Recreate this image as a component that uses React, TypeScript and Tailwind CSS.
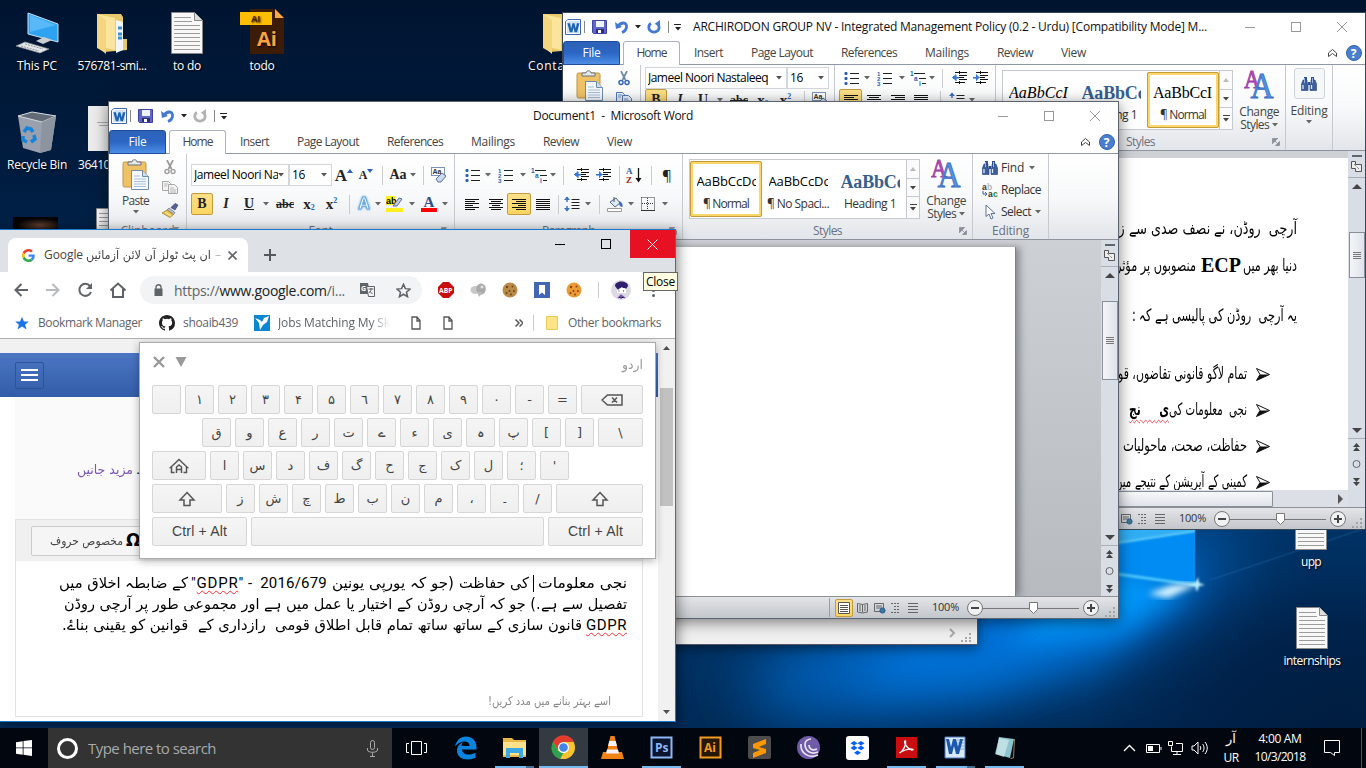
import React, { useLayoutEffect, useRef } from 'react';

const UI = "font-['Open_Sans','Noto_Sans',sans-serif]";
const UR = "font-['DejaVu_Sans',sans-serif]";

/* One line of text spaced or scaled to fill the width of its box. */
function Fit({ c, children, rtl = false }: { c: string; children: React.ReactNode; rtl?: boolean }) {
  const box = useRef<HTMLSpanElement>(null);
  const inner = useRef<HTMLSpanElement>(null);
  useLayoutEffect(() => {
    const b = box.current!;
    const i = inner.current!;
    i.style.letterSpacing = '';
    i.style.transform = '';
    const w = i.getBoundingClientRect().width;
    const target = b.clientWidth;
    if (rtl) i.style.transform = `scaleX(${target / w})`;
    else i.style.letterSpacing = `${(target - w) / Math.max(1, (i.textContent || '').length)}px`;
  });
  return (
    <span ref={box} className={`block shrink-0 whitespace-nowrap ${c}`}>
      <span ref={inner} dir={rtl ? 'rtl' : 'ltr'} lang={rtl ? 'ur' : 'en'} className="inline-block origin-left whitespace-pre">{children}</span>
    </span>
  );
}

function Cell({ w, children, c = '' }: { w: string; children?: React.ReactNode; c?: string }) {
  return <div className={`flex h-[22px] shrink-0 items-center justify-center ${w} ${c}`}>{children}</div>;
}
const Caret = ({ f = '#666' }: { f?: string }) => (
  <svg width="6" height="4" viewBox="0 0 6 4" className="shrink-0"><path d="M0 0h6L3 3.6z" fill={f} /></svg>
);
const Sep = () => <div className="h-[19px] w-px bg-[#c9ccd1]" />;
const ACTIVE = 'rounded-[2px] border border-[#c29b3e] bg-linear-to-b from-[#fbe08a] to-[#fdd55f]';

/* ---------- ribbon glyphs ---------- */
function WordLogo({ s = 16 }: { s?: number }) {
  return (
    <svg width={s} height={s} viewBox="0 0 17 17">
      <path d="M3 .5h13.500v16H.5V3z" fill="#fff" stroke="#2a5ca8" />
      <path d="M2 4l2-2h11v13H2z" fill="#cfe3f8" />
      <path d="M2.500 4.500h2.800l1.200 5.500L8 4.500h2l1.400 5.500 1.200-5.500h2.800l-2.700 9.500h-2.500L9 9l-1.200 5H5.200z" fill="#1e62b4" />
    </svg>
  );
}
const Save = () => (
  <svg width="15" height="14" viewBox="0 0 15 14">
    <path d="M.5.5h14v13h-13l-1-1z" fill="#5f66cc" stroke="#3f44a0" />
    <path d="M4 1h8v6H4z" fill="#eef2fc" /><path d="M4 9h8v4H4z" fill="#2d2f70" /><path d="M6 10h3v3H6z" fill="#fff" />
  </svg>
);
const Undo = () => (
  <svg width="14" height="14" viewBox="0 0 14 14">
    <path d="M3 6.500C6 1.500 12 2 11.500 7c-.2 2.500-2 4.500-4.500 5.500" fill="none" stroke="#4379d0" strokeWidth="2.800" />
    <path d="M0 2l1 7 6-2z" fill="#4379d0" />
  </svg>
);
const Redo = ({ f }: { f: string }) => (
  <svg width="14" height="14" viewBox="0 0 14 14">
    <path d="M4 3.500C1 5 1 10 4.500 11.500s8-.5 7.500-4.500c0-1.500-.8-2.800-2-3.500" fill="none" stroke={f} strokeWidth="2.800" />
    <path d="M13 0v6L7.500 4z" fill={f} />
  </svg>
);
const Clipboard = () => (
  <svg width="27" height="31" viewBox="0 0 27 31">
    <rect x="1" y="3" width="23" height="25" rx="1.500" fill="#efc265" stroke="#c1934a" />
    <path d="M6 6V3h4c0-3 5-3 5 0h4v3z" fill="#e6e9ed" stroke="#6c7076" />
    <path d="M9.500 11.500h11l6 6v13h-17z" fill="#f5f9fd" stroke="#6e8cab" />
    <path d="M20.500 11.500v6h6" fill="#cfdeed" stroke="#6e8cab" />
    <path d="M12 17h6M12 20h12M12 22.500h12M12 25h12M12 27.500h12" stroke="#a8c0d8" />
  </svg>
);
const Scissors = ({ f, g }: { f: string; g: string }) => (
  <svg width="12" height="15" viewBox="0 0 12 15" fill="none">
    <path d="M3 0l4.500 9M9 0L4.500 9" stroke={f} strokeWidth="1.700" />
    <circle cx="3" cy="11.500" r="2" stroke={g} strokeWidth="1.500" /><circle cx="9" cy="11.500" r="2" stroke={g} strokeWidth="1.500" />
  </svg>
);
const Copy = ({ f, g }: { f: string; g: string }) => (
  <svg width="16" height="13" viewBox="0 0 16 13">
    <path d="M.5.5h6l2 2v7h-8z" fill={g} stroke={f} /><path d="M6.500 3.500h6l3 3v6h-9z" fill={g} stroke={f} />
    <path d="M2 3h4M2 5h3M8 7h4M8 9h6M8 11h6" stroke={f} strokeWidth=".8" />
  </svg>
);
const Brush = () => (
  <svg width="17" height="15" viewBox="0 0 17 15">
    <path d="M9 4.500l4-4 3 1.500-3 5z" fill="#56629b" stroke="#384278" strokeWidth=".7" />
    <path d="M7 5l6 4.500-1.500 2L5 7z" fill="#b4bbca" stroke="#5d6474" strokeWidth=".6" />
    <path d="M5 7l6.500 4.500L8 14.500 0 10z" fill="#e6c456" stroke="#96782a" strokeWidth=".7" />
    <path d="M3 9l6 4" stroke="#fff2b0" />
  </svg>
);
function Align({ k }: { k: 'l' | 'c' | 'r' | 'j' }) {
  return (
    <svg width="14" height="11" viewBox="0 0 14 11" shapeRendering="crispEdges">
      {[14, 10, 14, 8, 14, 10].map((w, i) => {
        const ww = k === 'j' ? 14 : w;
        const x = k === 'r' ? 14 - ww : k === 'c' ? (14 - ww) / 2 : 0;
        return <rect key={i} x={x} y={i * 2} width={ww} height="1" fill="#111" />;
      })}
    </svg>
  );
}
function List({ k }: { k: 'b' | 'n' | 'm' }) {
  return (
    <svg width="16" height="15" viewBox="0 0 16 15">
      {k === 'b' && [2, 7, 12].map((y) => <rect key={y} x=".5" y={y - 1} width="3" height="3" rx="1" fill="#2b5fb0" />)}
      {k === 'n' && ['1', '2', '3'].map((t, i) => <text key={t} x="0" y={4.500 + i * 5} fontSize="6" fontWeight="700" fontFamily="Liberation Sans" fill="#2b5fb0">{t}</text>)}
      {k !== 'm' && <path d="M6 2.500h9M6 7.500h9M6 12.500h9" stroke="#222" />}
      {k === 'm' && (
        <g fontSize="6.500" fontWeight="700" fontFamily="Liberation Sans" fill="#2b5fb0">
          <text x="0" y="5">1</text><text x="4" y="10">a</text><text x="9" y="15">i</text>
          <path d="M4 2.500h11M9 7.500h7M12 12.500h4" stroke="#222" />
        </g>
      )}
    </svg>
  );
}
const Indent = ({ inn }: { inn: boolean }) => (
  <svg width="17" height="14" viewBox="0 0 17 14" shapeRendering="crispEdges">
    <path d="M4 1.500h12M8 4.500h8M8 6.500h5M8 8.500h8M4 11.500h10" stroke="#111" />
    <path d={inn ? 'M1 6h3V3.500l3.500 3L4 9.500V7H1z' : 'M8 6H5V3.500L1 6.500l4 3V7h3z'} fill="#3b7ad0" stroke="#3b7ad0" strokeWidth=".6" />
    <path d="M8.500 0v14" stroke="#111" strokeDasharray="1 1" />
  </svg>
);
const Spacing = () => (
  <svg width="16" height="16" viewBox="0 0 16 16">
    <path d="M3 1v5M3 10v5" stroke="#3b73c4" strokeWidth="1.500" />
    <path d="M0 4l3-3.600L6 4zM0 12l3 3.600L6 12z" fill="#3b73c4" /><path d="M7.500 3.500h8M7.500 6.500h8M7.500 9.500h8M7.500 12.500h8" stroke="#222" />
  </svg>
);
const Bucket = () => (
  <svg width="17" height="16" viewBox="0 0 17 16">
    <path d="M3 6l6-4 4 5-5 4z" fill="#dfe9f5" stroke="#4d6b93" /><path d="M7 1v5" stroke="#555" />
    <path d="M12 5c3 1 4 3 3.500 6-2 0-3-1-3.500-3z" fill="#3f6fb5" /><path d="M.5 12.500h14v3H.5z" fill="#fff" stroke="#999" />
  </svg>
);
const Borders = () => (
  <svg width="14" height="14" viewBox="0 0 14 14" fill="none" stroke="#333">
    <path d="M.5.500h13v13M.5.500v13M6.500 1v12M1 6.500h12" strokeDasharray="1 1" /><path d="M0 13.500h14" />
  </svg>
);
const Eraser = () => (
  <svg width="17" height="17" viewBox="0 0 17 17">
    <rect x=".5" y=".5" width="13" height="8" fill="#fff" stroke="#7c93b5" />
    <text x="1.500" y="7" fontSize="7" fontWeight="700" fontFamily="Liberation Sans" fill="#333">Aa</text>
    <path d="M5 12l6-6 4 3-5 6H7z" fill="#c9d9ef" stroke="#5c7096" />
  </svg>
);
const SortIcon = () => (
  <svg width="16" height="16" viewBox="0 0 16 16">
    <text x="0" y="7" fontSize="9" fontWeight="700" fontFamily="Liberation Serif" fill="#2c5aa8">A</text>
    <text x="0" y="15.500" fontSize="9" fontWeight="700" fontFamily="Liberation Serif" fill="#8d2a2a">Z</text>
    <path d="M12.500 1v12" stroke="#111" strokeWidth="1.300" /><path d="M9.500 11h6l-3 4.500z" fill="#111" />
  </svg>
);
const Binoculars = () => (
  <svg width="16" height="14" viewBox="0 0 16 14">
    <path d="M2 3h4v4l1 1v5.500H.5V7zM10 3h4l1.500 4v6.500H9V8l1-1z" fill="#3d5f9e" stroke="#22407c" strokeWidth=".6" />
    <path d="M3 0h3v3H3zM10 0h3v3h-3zM6.500 5h3v3h-3z" fill="#2c4f8e" /><path d="M2 8v4M10.500 8v4" stroke="#dfe8f7" strokeWidth="1.300" />
    <path d="M3.500 1v5M11.500 1v5" stroke="#9bb3dc" />
  </svg>
);
const ReplaceI = () => (
  <svg width="16" height="15" viewBox="0 0 16 15" fontFamily="Liberation Sans" fontWeight="700" fontSize="8.500">
    <text x="0" y="6.500" fill="#333">a</text><text x="5" y="6.500" fill="#b5b5b5">b</text><text x="6" y="13.500" fill="#333">a</text><text x="11" y="13.500" fill="#1f8a2a">c</text>
    <path d="M1 8v3h3M3 9l2 2-2 2" stroke="#35619f" fill="none" />
  </svg>
);
const Pointer = () => (
  <svg width="11" height="16" viewBox="0 0 11 16"><path d="M1 1v11.500l3-2.500 2 5 2-1-2-4.500h4z" fill="#fff" stroke="#5c7291" /></svg>
);
const BigA = () => (
  <svg width="30" height="30" viewBox="0 0 30 30" fontFamily="Liberation Serif">
    <text x="0" y="18" fontSize="26" fill="#b04bb4" stroke="#a040a8" strokeWidth=".9" textLength="16" lengthAdjust="spacingAndGlyphs">A</text>
    <text x="6.500" y="28" fontSize="36" fill="#5592e0" stroke="#3a70c4" strokeWidth=".9" textLength="23" lengthAdjust="spacingAndGlyphs">A</text>
  </svg>
);
const Launcher = () => (
  <svg width="8" height="8" viewBox="0 0 8 8"><path d="M.5 6V.5H6M3 3l4 4M7.500 3.500v4h-4z" fill="#8a8f98" stroke="#8a8f98" strokeWidth=".8" /></svg>
);

function Combo({ w, tw, text }: { w: string; tw: string; text: string }) {
  return (
    <div className={`flex h-[22px] shrink-0 items-center justify-between border border-[#d3d6db] bg-white pr-[4px] pl-[2px] text-[12px] text-black ${w}`}>
      <span className="min-w-0 overflow-hidden"><Fit c={`${tw} leading-[18px]`}>{text}</Fit></span>
      <Caret f="#555" />
    </div>
  );
}
const Serif = ({ children, c }: { children: React.ReactNode; c: string }) => <span className={`font-['Liberation_Serif',serif] leading-none text-[#222] ${c}`}>{children}</span>;

function FormatButtons() {
  return (
    <>
      <Cell w="w-[22px]" c={ACTIVE}><Serif c="text-[14px] font-bold">B</Serif></Cell>
      <Cell w="w-[26px]"><Serif c="text-[14px] font-bold italic">I</Serif></Cell>
      <Cell w="w-[20px]"><Serif c="text-[14px] font-bold underline">U</Serif></Cell>
      <Cell w="w-[13px]"><Caret /></Cell>
      <Cell w="w-[26px]"><Serif c="text-[12px] font-bold line-through">abc</Serif></Cell>
      <Cell w="w-[22px]"><Serif c="flex text-[15px] font-bold">x<span className="mt-[7px] text-[8px] text-[#2c62b8]">2</span></Serif></Cell>
      <Cell w="w-[23px]"><Serif c="flex text-[15px] font-bold">x<span className="text-[8px] text-[#2c62b8]">2</span></Serif></Cell>
    </>
  );
}

function Group({ w, label, children, launch = true, lw = '' }: { w: string; label: string; children: React.ReactNode; launch?: boolean; lw?: string }) {
  return (
    <div className={`flex h-full shrink-0 flex-col border-r border-[#c6c9ce] ${w}`}>
      <div className="h-[69px] shrink-0">{children}</div>
      <div className="flex h-[16px] items-center text-[12px] text-[#6a7180]">
        <div className="flex grow justify-center"><Fit c={lw}>{label}</Fit></div>
        {launch && <div className="mr-[5px] -ml-[13px]"><Launcher /></div>}
      </div>
    </div>
  );
}

function ClipGroup({ dim }: { dim: boolean }) {
  return (
    <Group w="w-[78px]" label="Clipboard" lw="w-[54px]">
      <div className="flex pt-[5px]">
        <div className="flex w-[53px] flex-col items-center">
          <Clipboard />
          <div className="mt-[2px] h-[18px] text-[12px] text-[#444]"><Fit c="w-[27px]">Paste</Fit></div>
          <Caret />
        </div>
        <div className="flex w-[16px] flex-col items-center">
          <div className="flex h-[22px] items-start pt-px"><Scissors f={dim ? '#9a9a9a' : '#6d87ac'} g={dim ? '#a2a2a2' : '#3567b4'} /></div>
          <div className="flex h-[22px] items-start"><Copy f={dim ? '#a6a6a6' : '#4f78b5'} g={dim ? '#f3f3f3' : '#e6effa'} /></div>
          <Brush />
        </div>
      </div>
    </Group>
  );
}

type Sty = { s: string; n: string; c: string; sw: string; nw: string; on?: boolean };
function StylesGroup({ items, pl }: { items: Sty[]; pl: string }) {
  return (
    <Group w="w-[290px]" label="Styles" lw="w-[29px]">
      <div className={`flex pt-[5px] ${pl}`}>
        <div className="flex h-[60px] w-[233px] border border-[#c6cad0] bg-white">
          {items.map((i) => (
            <div key={i.n} className={`mt-[1px] flex h-[56px] w-[72px] flex-col items-center justify-end overflow-hidden rounded-[2px] border-[3px] ${i.on ? 'border-[#fbd76b] outline outline-[#c29b3e] -outline-offset-1' : 'border-transparent'}`}>
              <div className={`flex h-[26px] items-center overflow-hidden pt-[2px] ${i.c}`}><Fit c={i.sw}>{i.s}</Fit></div>
              <div className="h-[20px] text-[12px] leading-[19px] text-[#333]"><Fit c={i.nw}>{i.n}</Fit></div>
            </div>
          ))}
          <div className="flex grow flex-col border-l border-[#c6cad0] bg-[#fbfbfc]">
            <div className="flex grow items-center justify-center"><svg width="6" height="4"><path d="M0 4h6L3 0z" fill="#bbb" /></svg></div>
            <div className="flex grow items-center justify-center border-y border-[#c6cad0]"><Caret f="#444" /></div>
            <div className="flex grow flex-col items-center justify-center gap-[2px]"><div className="h-px w-[7px] bg-[#444]" /><Caret f="#444" /></div>
          </div>
        </div>
        <div className="flex w-[52px] flex-col items-center text-[12px] leading-[13px] text-[#444]">
          <BigA />
          <div className="mt-[5px]"><Fit c="w-[40px]">Change</Fit></div>
          <div className="flex items-center gap-[3px]"><Fit c="w-[29px]">Styles</Fit><Caret /></div>
        </div>
      </div>
    </Group>
  );
}

function Caption({ title, tw, redo, pad }: { title: string; tw: string; redo: string; pad: string }) {
  return (
    <div className="flex h-[28px] shrink-0 items-center pl-[2px]">
      <div className="flex w-[107px] items-center">
        <WordLogo />
        <div className="mr-[7px] ml-[3px] h-[12px] w-px bg-[#888]" /><Save />
        <div className="ml-[8px]"><Undo /></div>
        <div className="ml-[6px]"><Caret f="#222" /></div>
        <div className="ml-[6px] flex items-center gap-[7px]"><Redo f={redo} /><div className="h-[12px] w-px bg-[#888]" /></div>
      </div>
      <div className="flex w-[11px] flex-col items-center gap-[2px]"><div className="h-px w-[7px] bg-[#222]" /><Caret f="#222" /></div>
      <div className={`flex grow text-[12px] text-[#111] ${pad}`}><Fit c={tw}>{title}</Fit></div>
      <svg width="104" height="12" viewBox="0 0 104 12" fill="none" stroke="#999" className="mr-[16px]">
        <path d="M0 6.500h10" /><rect x="46.500" y="1.500" width="9" height="9" /><path d="M92 1l10 10M102 1L92 11" />
      </svg>
    </div>
  );
}
function Tabs() {
  const t: [string, string, string][] = [
    ['Insert', 'w-[29px]', 'ml-[14px]'], ['Page Layout', 'w-[62px]', 'ml-[28px]'], ['References', 'w-[56px]', 'ml-[28px]'],
    ['Mailings', 'w-[44px]', 'ml-[28px]'], ['Review', 'w-[36px]', 'ml-[28px]'], ['View', 'w-[25px]', 'ml-[28px]'],
  ];
  return (
    <div className="flex h-[24px] shrink-0 items-center border-b border-[#8f99a5] text-[12px] text-[#444]">
      <div className="flex h-[24px] w-[57px] items-center justify-center rounded-t-[3px] border border-[#1e4c9a] bg-linear-to-b from-[#2f62b8] via-[#2b66c4] to-[#4d8ee6] text-white"><Fit c="w-[18px]">File</Fit></div>
      <div className="mt-[1px] ml-[3px] flex h-[25px] w-[57px] items-center justify-center rounded-t-[3px] border border-b-0 border-[#aeb4bd] bg-white pb-px"><Fit c="w-[30px]">Home</Fit></div>
      {t.map(([n, w, m]) => <div key={n} className={`pt-px ${m}`}><Fit c={w}>{n}</Fit></div>)}
      <div className="mr-[3px] ml-auto flex items-center gap-[9px]">
        <svg width="9" height="8" viewBox="0 0 9 8" fill="none" stroke="#444"><path d="M.5 5V4l4-3.500 4 3.500v3.500L4.500 4.500.5 7.500z" /></svg>
        <svg width="16" height="16" viewBox="0 0 16 16"><circle cx="8" cy="8" r="7.500" fill="#4a7fd0" stroke="#3460a8" /><text x="4.800" y="12.500" fontSize="12" fontWeight="700" fontFamily="Open Sans" fill="#fff">?</text></svg>
      </div>
    </div>
  );
}
function Status({ first }: { first: boolean }) {
  return (
    <div className="flex h-[22px] shrink-0 items-center justify-end border-t border-[#8b8f96] bg-linear-to-b from-[#e3e5e8] to-[#c3c6cb] text-[11px] text-[#333]">
      {first && <div className="mr-[5px] h-[19px] w-px bg-[#9a9ea5]" />}
      <div className={`flex h-[18px] w-[18px] items-center justify-center ${first ? ACTIVE : ''}`}>
        <svg width="12" height="12" viewBox="0 0 12 12" stroke="#555" fill="#fff" className="shrink-0"><path d="M.5.500h11v11H.500z" /><path d="M2 3.500h8M2 5.500h8M2 7.500h8M2 9.500h8" /></svg>
      </div>
      <svg width="72" height="12" viewBox="0 0 72 12" stroke="#666" fill="none" className="ml-[4px]">
        <path d="M.5 1.500l5 1 5-1v8.500l-5 1-5-1zM5.500 2.500v8M2 4h2M2 6h2M2 8h2M7 4h2M7 6h2M7 8h2" />
        <path d="M17.500 1.500h9v8h-9zM19 4h6M19 6h6" /><circle cx="25.500" cy="8.500" r="2.600" fill="#3c7a8c" stroke="#2f5aa0" />
        <path d="M34 1.500h8M37 4.500h6M37 7.500h6M34 10.500h9" strokeDasharray="2 1" /><path d="M51 1.500h10M51 4.500h10M51 7.500h10M51 10.500h10" />
      </svg>
      <Fit c="ml-[3px] w-[27px]">100%</Fit>
      <svg width="134" height="18" viewBox="0 0 134 18" className="ml-[6px]" fill="#fff" stroke="#777">
        <path d="M17 9.500h97" /><circle cx="10" cy="9" r="7.500" fill="#f0f1f3" /><circle cx="126" cy="9" r="7.500" fill="#f0f1f3" />
        <path d="M6 9h8M122 9h8M126 5v8" stroke="#444" strokeWidth="2" /><path d="M64.500 3.500h8v7l-4 4-4-4z" />
      </svg>
      <svg width="15" height="20" viewBox="0 0 15 20" fill="#a0a4aa" className="mr-px ml-[3px]"><path d="M11 9h2v2h-2zM11 13h2v2h-2zM7 13h2v2H7zM11 17h2v2h-2zM7 17h2v2H7zM3 17h2v2H3z" /></svg>
    </div>
  );
}
function VScroll({ gap, thumb, end }: { gap: string; thumb: string; end: string }) {
  return (
    <div className={`flex w-[17px] shrink-0 flex-col items-center bg-[#d9dde5] ${end}`}>
      <div className="mt-[4px] flex h-[23px] w-full shrink-0 flex-col items-center gap-[4px] border-b border-[#aab0ba]">
        <div className="h-[2px] w-[10px] bg-[#5f6670]" />
        <svg width="11" height="11" viewBox="0 0 11 11" fill="#eee" stroke="#555"><path d="M.5.500h4v3h6v7h-6v-3h-4z" /><path d="M3 3l5 5" strokeDasharray="1 1" /></svg>
      </div>
      <svg width="10" height="5" className="mt-[6px] shrink-0"><path d="M0 5h10L5 0z" fill="#444" /></svg>
      <div className={`flex w-[16px] shrink-0 items-center justify-center border border-[#8a909a] bg-linear-to-r from-[#f4f5f8] to-[#dfe3ea] ${gap} ${thumb}`}>
        <div className="flex flex-col gap-px">{[0, 1, 2, 3].map((i) => <div key={i} className="h-px w-[8px] bg-[#777]" />)}</div>
      </div>
      <div className="mt-auto flex h-[61px] w-full shrink-0 flex-col items-center">
        <svg width="10" height="5" className="mb-[5px] shrink-0"><path d="M0 0h10L5 5z" fill="#444" /></svg>
        <div className="h-px w-full shrink-0 bg-[#aab0ba]" />
        <svg width="9" height="46" viewBox="0 0 9 46" fill="#444" className="mt-[4px] shrink-0"><path d="M1 4h7L4.500 0zM1 8h7L4.500 4z" /><circle cx="4.500" cy="21" r="3.500" fill="none" stroke="#666" /><path d="M1 35h7l-3.500 4zM1 39h7l-3.500 4z" /></svg>
      </div>
    </div>
  );
}
const RIBBON = 'flex h-[86px] shrink-0 border-b border-[#8e959e] bg-linear-to-b from-white via-[#f8f9fa] to-[#e2e5ea]';

function WordFront() {
  const items: Sty[] = [
    { s: 'AaBbCcDc', n: '¶ Normal', c: 'w-[59px] text-[13px] text-black', sw: 'w-[61px]', nw: 'w-[46px]', on: true },
    { s: 'AaBbCcDc', n: '¶ No Spaci...', c: 'w-[59px] text-[13px] text-black', sw: 'w-[61px]', nw: 'w-[62px]' },
    { s: 'AaBbCc', n: 'Heading 1', c: "w-[59px] text-[18px] font-bold text-[#365f91] font-['Liberation_Serif',serif]", sw: 'w-[64px]', nw: 'w-[52px]' },
  ];
  return (
    <section className={`absolute top-[101px] left-[108px] flex h-[518px] w-[1011px] flex-col border border-[#5b6470] bg-white shadow-[0_3px_14px_rgba(0,0,0,.5)] ${UI}`}>
      <Caption title="Document1  -  Microsoft Word" tw="w-[160px]" redo="#b3b3b3" pad="pl-[304px]" />
      <Tabs />
      <div className={RIBBON}>
        <ClipGroup dim />
        <Group w="w-[268px]" label="Font" lw="w-[24px]">
          <div className="flex pt-[10px] pl-[4px]">
            <Combo w="w-[98px]" tw="w-[90px]" text="Jameel Noori Nas" /><Combo w="w-[43px]" tw="w-[13px]" text="16" />
            <Cell w="w-[24px]"><Serif c="text-[17px] font-bold">A</Serif><svg width="6" height="12"><path d="M0 4h6L3 0z" fill="#2c62b8" /></svg></Cell>
            <Cell w="w-[20px]"><Serif c="text-[12px] font-bold">A</Serif><svg width="6" height="12"><path d="M0 0h6L3 4z" fill="#2c62b8" /></svg></Cell>
            <Cell w="w-[12px]"><Sep /></Cell>
            <Cell w="w-[20px]"><Serif c="text-[14px] font-bold">Aa</Serif></Cell><Cell w="w-[9px]"><Caret /></Cell>
            <Cell w="w-[12px]"><Sep /></Cell><Cell w="w-[20px]"><Eraser /></Cell>
          </div>
          <div className="flex pt-[7px] pl-[4px]">
            <FormatButtons />
            <Cell w="w-[12px]"><Sep /></Cell>
            <Cell w="w-[18px]"><span className="font-['Liberation_Sans'] text-[16px] leading-none font-bold text-white [-webkit-text-stroke:1px_#6ba7dc] drop-shadow-[0_0_1px_#3b9be8]">A</span></Cell>
            <Cell w="w-[9px]"><Caret /></Cell>
            <Cell w="w-[24px]"><svg width="17" height="16" viewBox="0 0 17 16"><path d="M0 0h9v9H0zM0 12h17v4H0z" fill="#ffee20" /><text x="0" y="8" fontSize="9" fontWeight="700" fontFamily="Liberation Sans">ab</text><path d="M7 10l6-8 3 1-5 7z" fill="#c2cfe3" stroke="#5b6f8e" /></svg></Cell>
            <Cell w="w-[11px]"><Caret /></Cell>
            <Cell w="w-[24px]"><svg width="16" height="16" viewBox="0 0 16 16"><text x="2.500" y="11" fontSize="15" fontWeight="700" fontFamily="Liberation Serif" fill="#2d4f8e">A</text><path d="M0 12h16v4H0z" fill="#f00" /></svg></Cell>
            <Cell w="w-[8px]"><Caret /></Cell>
          </div>
        </Group>
        <Group w="w-[228px]" label="Paragraph" lw="w-[53px]">
          <div className="flex pt-[10px] pl-[8px]">
            <Cell w="w-[19px]"><List k="b" /></Cell><Cell w="w-[12px]"><Caret /></Cell>
            <Cell w="w-[24px]"><List k="n" /></Cell><Cell w="w-[9px]"><Caret /></Cell>
            <Cell w="w-[23px]"><List k="m" /></Cell><Cell w="w-[6px]"><Caret /></Cell>
            <Cell w="w-[14px]"><Sep /></Cell><Cell w="w-[22px]"><Indent inn={false} /></Cell><Cell w="w-[23px]"><Indent inn /></Cell>
            <Cell w="w-[8px]"><Sep /></Cell><Cell w="w-[22px]"><SortIcon /></Cell><Cell w="w-[12px]"><Sep /></Cell>
            <Cell w="w-[20px]"><span className="text-[15px] leading-none text-[#222]">¶</span></Cell>
          </div>
          <div className="flex pt-[7px] pl-[5px]">
            <Cell w="w-[24px]"><Align k="l" /></Cell><Cell w="w-[23px]"><Align k="c" /></Cell>
            <Cell w="w-[24px]" c={ACTIVE}><Align k="r" /></Cell><Cell w="w-[23px]"><Align k="j" /></Cell>
            <Cell w="w-[8px]"><Sep /></Cell><Cell w="w-[20px]"><Spacing /></Cell><Cell w="w-[12px]"><Caret /></Cell>
            <Cell w="w-[10px]"><Sep /></Cell><Cell w="w-[22px]"><Bucket /></Cell><Cell w="w-[10px]"><Caret /></Cell>
            <Cell w="w-[24px]"><Borders /></Cell><Cell w="w-[9px]"><Caret /></Cell>
          </div>
        </Group>
        <StylesGroup items={items} pl="pl-[6px]" />
        <Group w="w-[76px]" label="Editing" lw="w-[37px]" launch={false}>
          <div className="flex flex-col pt-[3px] pl-[9px] text-[12px] text-[#333]">
            <div className="flex h-[22px] items-center gap-[3px]"><div className="flex w-[16px] justify-center"><Binoculars /></div><Fit c="w-[23px]">Find</Fit><div className="ml-[2px]"><Caret /></div></div>
            <div className="flex h-[22px] items-center gap-[3px]"><div className="flex w-[16px] justify-center"><ReplaceI /></div><Fit c="w-[40px]">Replace</Fit></div>
            <div className="flex h-[22px] items-center gap-[3px]"><div className="flex w-[16px] justify-center"><Pointer /></div><Fit c="w-[30px]">Select</Fit><div className="ml-[1px]"><Caret /></div></div>
          </div>
        </Group>
      </div>
      <div className="flex min-h-0 flex-1 bg-linear-to-b from-[#cdd0d5] to-[#b7babf]">
        <div className="mt-[7px] w-[907px] border-r border-[#7d8187] bg-white shadow-[4px_0_7px_rgba(70,75,80,.5)]" />
        <div className="ml-auto flex"><VScroll gap="mt-[23px]" thumb="h-[79px]" end="pb-0" /></div>
      </div>
      <Status first />
    </section>
  );
}

function DocLine({ h, children, bullet = false }: { h: string; children: React.ReactNode; bullet?: boolean }) {
  return (
    <div className={`flex shrink-0 items-center justify-end ${h}`}>
      {children}
      {bullet && <svg width="14" height="13" viewBox="0 0 14 13" className="mr-[27px] ml-[9px]"><path d="M.5.500l13 6-13 6 3.500-6z" fill="#fff" stroke="#111" /><path d="M4 6.500h9.500l-13 6z" fill="#111" /></svg>}
    </div>
  );
}

function WordBack() {
  const items: Sty[] = [
    { s: 'AaBbCcI', n: 'Emphasis', c: "w-[60px] text-[16px] italic text-black font-['Liberation_Serif',serif]", sw: 'w-[59px]', nw: 'w-[50px]' },
    { s: 'AaBbCc', n: 'Heading 1', c: "w-[59px] text-[18px] font-bold text-[#365f91] font-['Liberation_Serif',serif]", sw: 'w-[64px]', nw: 'w-[52px]' },
    { s: 'AaBbCcI', n: '¶ Normal', c: "w-[60px] text-[16px] text-black font-['Liberation_Serif',serif]", sw: 'w-[59px]', nw: 'w-[46px]', on: true },
  ];
  return (
    <section className={`absolute top-[12px] left-[562px] flex h-[518px] w-[804px] flex-col border border-[#39475a] bg-white ${UI}`}>
      <Caption title="ARCHIRODON GROUP NV - Integrated Management Policy (0.2 - Urdu) [Compatibility Mode] M..." tw="w-[514px]" redo="#4379d0" pad="pl-[10px]" />
      <Tabs />
      <div className={RIBBON}>
        <ClipGroup dim={false} />
        <Group w="w-[194px]" label="Font" lw="w-[24px]">
          <div className="flex pt-[2px] pl-[4px]"><Combo w="w-[142px]" tw="w-[120px]" text="Jameel Noori Nastaleeq" /><Combo w="w-[42px]" tw="w-[13px]" text="16" /></div>
          <div className="flex pl-[4px]"><FormatButtons /><Cell w="w-[14px]"><Sep /></Cell><Cell w="w-[19px]"><Eraser /></Cell></div>
        </Group>
        <Group w="w-[161px]" label="Paragraph" lw="w-[53px]">
          <div className="flex pt-[2px] pl-[7px]">
            <Cell w="w-[19px]"><List k="b" /></Cell><Cell w="w-[12px]"><Caret /></Cell>
            <Cell w="w-[24px]"><List k="n" /></Cell><Cell w="w-[9px]"><Caret /></Cell>
            <Cell w="w-[23px]"><List k="m" /></Cell><Cell w="w-[6px]"><Caret /></Cell>
            <Cell w="w-[14px]"><Sep /></Cell><Cell w="w-[20px]"><Indent inn={false} /></Cell><Cell w="w-[22px]"><Indent inn /></Cell>
          </div>
          <div className="flex pl-[4px]">
            <Cell w="w-[23px]" c={ACTIVE}><Align k="l" /></Cell><Cell w="w-[24px]"><Align k="c" /></Cell>
            <Cell w="w-[23px]"><Align k="r" /></Cell><Cell w="w-[24px]"><Align k="j" /></Cell>
            <Cell w="w-[14px]"><Sep /></Cell><Cell w="w-[20px]"><Spacing /></Cell><Cell w="w-[10px]"><Caret /></Cell>
          </div>
        </Group>
        <StylesGroup items={items} pl="pl-[6px]" />
        <div className="flex w-[47px] flex-col items-center border-r border-[#c6c9ce] pt-[3px] text-[12px] text-[#444]">
          <div className="flex h-[31px] w-[31px] shrink-0 items-center justify-center rounded-[3px] border border-[#cfd3da] bg-[#f6f7f9]"><Binoculars /></div>
          <div className="mt-[3px]"><Fit c="w-[37px]">Editing</Fit></div><Caret />
        </div>
      </div>
      <div className="flex min-h-0 flex-1 bg-[#cdd0d5]">
        <div className="flex min-w-0 grow flex-col">
          <div className={`mt-[7px] flex min-h-0 flex-1 flex-col overflow-hidden bg-white pt-[52px] pr-[51px] text-[17px] text-black ${UR}`}>
            <DocLine h="h-[37px]"><Fit rtl c="w-[182px]">آرچی  روڈن، نے نصف صدی سے زا</Fit></DocLine>
            <DocLine h="h-[37px]"><Fit rtl c="w-[80px]">منصوبوں پر مؤثر</Fit><span className="mr-[2px] ml-[5px] pb-[2px] font-['Liberation_Serif',serif] text-[20px] font-bold">ECP</span><Fit rtl c="w-[54px]">دنیا بھر میں</Fit></DocLine>
            <DocLine h="h-[63px]"><Fit rtl c="w-[165px]">یہ آرچی  روڈن کی پالیسی ہے کہ :</Fit></DocLine>
            <DocLine h="mt-[9px] h-[36px]" bullet><Fit rtl c="w-[132px]">تمام لاگو قانونی تقاضوں، قوا</Fit></DocLine>
            <DocLine h="h-[36px]" bullet>
              <Fit rtl c="w-[40px] font-bold"><span className="underline decoration-red-500 decoration-wavy decoration-1 underline-offset-4">ی     نج</span></Fit><Fit rtl c="w-[78px]">نجی  معلومات کی</Fit>
            </DocLine>
            <DocLine h="h-[36px]" bullet><Fit rtl c="w-[124px]">حفاظت، صحت، ماحولیات</Fit></DocLine>
            <DocLine h="h-[36px]" bullet><Fit rtl c="w-[132px]">کمپنی کے آپریشن کے نتیجے میں</Fit></DocLine>
          </div>
          <div className="flex h-[17px] shrink-0 items-center bg-[#dcdfe6] pr-[5px]">
            <div className="h-[16px] w-[710px] rounded-[1px] border border-[#8a909a] bg-linear-to-b from-[#f7f8fa] to-[#dfe3ea]" />
            <svg width="5" height="10" className="ml-auto"><path d="M0 0v10l5-5z" fill="#555" /></svg>
          </div>
        </div>
        <VScroll gap="mt-[43px]" thumb="h-[46px]" end="pb-[18px]" />
      </div>
      <Status first={false} />
    </section>
  );
}

/* ---------- browser ---------- */
function Key({ w = 'w-[29px]', children }: { w?: string; children?: React.ReactNode }) {
  return <div className={`flex h-[29px] shrink-0 items-center justify-center rounded-[2px] border border-[#d6d6d6] bg-linear-to-b from-[#f5f5f5] to-[#efefef] text-[13px] text-[#444] ${w}`}>{children}</div>;
}
const Shift = ({ caps = false }: { caps?: boolean }) => (
  <svg width="20" height="16" viewBox="0 0 20 16" fill="none" stroke="#555" strokeWidth="1.500">
    {caps ? <><path d="M5.500 14.500H2.500V9.500H1.500L10 1.500l8.500 8h-1v5h-3" /><path d="M7.500 15v-6l2.500-2 2.500 2v6M8 11.500h4" /></> : <path d="M10 1.500L17 9h-4v5.500H7V9H3z" />}
  </svg>
);
function Keyboard() {
  const r = (s: string) => s.split(' ').map((k, i) => <Key key={i}>{k}</Key>);
  return (
    <div className="absolute top-[3px] left-[139px] flex h-[217px] w-[517px] flex-col border border-[#aaa] bg-white px-[12px] shadow-[0_2px_8px_rgba(0,0,0,.3)]">
      <div className="flex h-[42px] shrink-0 items-center pt-px">
        <svg width="34" height="12" viewBox="0 0 34 12" className="mb-[6px] ml-[1px]"><path d="M1 1l10 10M11 1L1 11" stroke="#999" strokeWidth="2.400" /><path d="M22.500 1h11L28 11z" fill="#999" /></svg>
        <div className={`ml-auto text-[13px] text-[#999] ${UR}`}><Fit rtl c="w-[21px]">اردو</Fit></div>
      </div>
      <div dir="ltr" lang="ur" className={`flex flex-col gap-[4px] ${UR}`}>
        <div className="flex gap-[4px]"><Key />{r('١ ٢ ٣ ۴ ۵ ٦ ۷ ٨ ٩ ٠ - =')}<Key w="w-[62px]"><svg width="22" height="12" viewBox="0 0 22 12" fill="none" stroke="#555" strokeWidth="1.500"><path d="M6.500 1H21v10H6.500L1 6zM11 3.500l5 5M16 3.500l-5 5" /></svg></Key></div>
        <div className="flex gap-[4px] pl-[50px]">{r('ق و ع ر ت ے ء ی ہ پ [ ]')}<Key w="w-[45px]">\</Key></div>
        <div className="flex gap-[4px]"><Key w="w-[54px]"><Shift caps /></Key>{r("ا س د ف گ ح ج ک ل ؛ '")}</div>
        <div className="flex gap-[4px]"><Key w="w-[70px]"><Shift /></Key>{r('ز ش چ ط ب ن م ، ۔ /')}<Key w="w-[87px]"><Shift /></Key></div>
        <div className="flex gap-[4px] font-['Liberation_Sans',sans-serif]">
          <Key w="w-[95px]"><Fit c="w-[55px] text-[14px]">Ctrl + Alt</Fit></Key><Key w="w-[293px]" /><Key w="w-[95px]"><Fit c="w-[55px] text-[14px]">Ctrl + Alt</Fit></Key>
        </div>
      </div>
    </div>
  );
}
const Google = () => (
  <svg width="13" height="13" viewBox="0 0 48 48"><path fill="#EA4335" d="M24 9.500c3.540 0 6.710 1.220 9.210 3.600l6.850-6.850C35.900 2.380 30.470 0 24 0 14.620 0 6.510 5.380 2.560 13.220l7.980 6.190C12.430 13.720 17.740 9.500 24 9.500z" /><path fill="#4285F4" d="M46.980 24.550c0-1.570-.15-3.090-.38-4.550H24v9.020h12.940c-.58 2.960-2.260 5.480-4.780 7.180l7.730 6c4.510-4.180 7.090-10.360 7.090-17.650z" /><path fill="#FBBC05" d="M10.530 28.590A14.500 14.500 0 0 1 10.530 19.410l-7.980-6.190a24 24 0 0 0 0 21.560l7.980-6.190z" /><path fill="#34A853" d="M24 48c6.480 0 11.930-2.130 15.890-5.810l-7.730-6c-2.150 1.450-4.920 2.300-8.160 2.300-6.260 0-11.570-4.220-13.470-9.910l-7.980 6.190C6.510 42.620 14.620 48 24 48z" /></svg>
);
const Page = () => <svg width="10" height="14" viewBox="0 0 10 14" fill="#fff" stroke="#555" strokeWidth="1.300"><path d="M1 1h5l3 3.500V13H1zM6 1v4h3" /></svg>;
const Cookie = ({ a, b }: { a: string; b: string }) => <svg width="16" height="16" viewBox="0 0 16 16"><circle cx="8" cy="8" r="7.500" fill={a} /><g fill={b}><circle cx="5" cy="5" r="1.200" /><circle cx="10.500" cy="4.500" r="1" /><circle cx="7.500" cy="9" r="1" /><circle cx="12" cy="9" r="1" /><circle cx="4.500" cy="11" r="1" /><circle cx="9" cy="12.500" r="1" /></g></svg>;

function Browser() {
  return (
    <section className={`absolute top-[229px] left-[-1px] flex h-[493px] w-[677px] flex-col border border-[#1979ca] bg-white text-[13px] text-[#5f6368] shadow-[2px_2px_12px_rgba(0,0,0,.45)] ${UI}`}>
      <div className="flex h-[42px] shrink-0 bg-[#dee1e6]">
        <div className="mt-[8px] ml-[8px] flex h-[34px] w-[240px] items-center rounded-t-[8px] bg-white pl-[14px] text-[12px] text-[#444]">
          <Google />
          <div className="ml-[9px]"><Fit c="w-[39px]">Google</Fit></div>
          <div className={`mr-[4px] ml-[3px] ${UR}`}><Fit rtl c="w-[125px]">ان پٹ ٹولز آن لائن آزمائیں</Fit></div>
          <span className="text-[#bbb]">–</span>
          <svg width="9" height="9" viewBox="0 0 9 9" className="ml-[7px]" stroke="#5f6368" strokeWidth="1.600"><path d="M.5.500l8 8M8.500.500l-8 8" /></svg>
        </div>
        <svg width="12" height="12" viewBox="0 0 12 12" className="mt-[19px] ml-[16px]" stroke="#55595e" strokeWidth="2"><path d="M6 0v12M0 6h12" /></svg>
        <svg width="56" height="10" viewBox="0 0 56 10" className="mt-[9px] ml-auto" fill="none" stroke="#000"><path d="M0 5.500h10" /><rect x="46.500" y=".5" width="9" height="9" /></svg>
        <div className="ml-[19px] flex h-[28px] w-[45px] items-center justify-center bg-[#e81123]"><svg width="11" height="11" viewBox="0 0 11 11" stroke="#fff"><path d="M.5.500l10 10M10.500.500l-10 10" /></svg></div>
      </div>
      <div className="flex h-[36px] shrink-0 items-center pl-[14px]">
        <svg width="112" height="18" viewBox="0 0 112 18" fill="none" strokeWidth="2" stroke="#5f6368">
          <path d="M14 9H1.500M7.500 3L1.500 9l6 6" /><path d="M32 9h12.500M38.500 3l6 6-6 6" stroke="#b8babd" />
          <path d="M76 5a6 6 0 1 0 1 6" /><path d="M78 2v6h-6" fill="#5f6368" stroke="none" /><path d="M96.500 9.500L104 2.500l7.500 7M99 8v8h10V8" />
        </svg>
        <div className="ml-[14px] flex h-[28px] w-[282px] items-center rounded-full bg-[#f1f3f4] pl-[14px] text-[14px]">
          <svg width="9" height="12" viewBox="0 0 9 12"><path d="M.5 4.500h8V12h-8z" fill="#5f6368" /><path d="M2 5V3c0-3 5-3 5 0v2" fill="none" stroke="#5f6368" strokeWidth="1.300" /></svg>
          <div className="ml-[11px]"><Fit c="w-[171px]">https://<span className="text-[#202124]">www.google.com</span>/i...</Fit></div>
          <svg width="15" height="14" viewBox="0 0 15 14" className="ml-[15px]"><path d="M0 0h8l2 11H0z" fill="#5f6368" /><path d="M6.500 3.500h8v10h-6z" fill="#f1f3f4" stroke="#5f6368" /><text x="1" y="8" fontSize="7" fontWeight="700" fill="#fff" fontFamily="Open Sans">G</text><path d="M8.500 6h5M11 5v1c0 2-1 3-2 4M9.500 8l3 3" stroke="#5f6368" fill="none" /></svg>
          <svg width="15" height="15" viewBox="0 0 24 24" className="ml-[21px]" fill="none" stroke="#5f6368" strokeWidth="2.400"><path d="M12 2l3 7 7.500.700-5.700 5 1.700 7.300L12 18l-6.500 4 1.700-7.300-5.700-5L9 9z" /></svg>
        </div>
        <div className="ml-[16px] flex items-center gap-[16px]">
          <svg width="16" height="16" viewBox="0 0 16 16"><path d="M5 0h6l5 5v6l-5 5H5l-5-5V5z" fill="#c70d0d" /><text x="1" y="10.500" fontSize="6.800" fontWeight="700" fill="#fff" fontFamily="Open Sans">ABP</text></svg>
          <svg width="16" height="15" viewBox="0 0 16 15"><ellipse cx="5" cy="7" rx="4.500" ry="4" fill="#c7c7c7" /><ellipse cx="11" cy="6" rx="4.800" ry="5.500" fill="#a9a9a9" /><path d="M7 9h6l-4 5z" fill="#b9b9b9" /><circle cx="12" cy="4" r="1.500" fill="#e4e4e4" /></svg>
          <Cookie a="#ba8a48" b="#6c4718" />
          <svg width="16" height="16"><path d="M0 0h16v16H0z" fill="#4267b2" /><path d="M5 3h6v10l-3-2.500L5 13z" fill="#fff" /></svg>
          <Cookie a="#eb9a35" b="#874516" />
        </div>
        <div className="ml-[16px] h-[16px] w-px bg-[#c8cacd]" />
        <svg width="20" height="20" viewBox="0 0 20 20" className="ml-[12px]"><circle cx="10" cy="10" r="10" fill="#dcd9e3" /><path d="M6 7h9v6H6z" fill="#fff" /><path d="M4 6c0-6 13-6 13 0l-2 3c-1-2-3 0-4-2-2 2-3 1-4 3z" fill="#30206c" /><path d="M7.500 11h1M12 11h1" stroke="#30206c" /><path d="M7 18l3-3 4 3M10 15v4" stroke="#7a54b3" strokeWidth="1.300" /></svg>
        <div className="ml-[21px] flex flex-col gap-[2px]">{[0, 1, 2].map((i) => <div key={i} className="h-[3px] w-[3px] rounded-full bg-[#5f6368]" />)}</div>
      </div>
      <div className="flex h-[31px] shrink-0 items-center border-b border-[#b0b0b0] pl-[15px] text-[12px]">
        <svg width="14" height="13" viewBox="0 0 24 23"><path d="M12 0l3.500 8H24l-6.500 5.500L20 22l-8-5-8 5 2.500-8.500L0 8h8.500z" fill="#1a73e8" /></svg>
        <Fit c="ml-[9px] w-[104px]">Bookmark Manager</Fit>
        <svg width="16" height="16" viewBox="0 0 16 16" className="ml-[17px]" fill="#222"><path d="M8 0C3.580 0 0 3.580 0 8c0 3.540 2.290 6.530 5.470 7.590.4.070.55-.17.55-.38 0-.19-.01-.82-.01-1.490-2.010.37-2.530-.49-2.690-.94-.09-.23-.48-.94-.82-1.130-.28-.15-.68-.52-.01-.53.63-.01 1.080.58 1.230.82.72 1.210 1.870.87 2.330.66.07-.52.28-.87.51-1.070-1.780-.2-3.640-.89-3.640-3.950 0-.87.31-1.590.82-2.150-.08-.2-.36-1.020.08-2.120 0 0 .67-.21 2.200.82a7.600 7.600 0 0 1 4 0c1.530-1.040 2.200-.82 2.200-.82.44 1.100.16 1.920.08 2.120.51.56.82 1.270.82 2.150 0 3.070-1.870 3.750-3.650 3.950.29.25.54.73.54 1.480 0 1.070-.01 1.930-.01 2.200 0 .21.15.46.55.38A8 8 0 0 0 16 8c0-4.420-3.580-8-8-8z" /></svg>
        <Fit c="ml-[8px] w-[55px]">shoaib439</Fit>
        <svg width="16" height="16" viewBox="0 0 16 16" className="ml-[16px]"><path d="M0 0h16v16H0z" fill="#0a87d0" /><path d="M1 3l5 2 2 2 2-4 5-2-2 6-4 3-3 5-1-7z" fill="#fff" /></svg>
        <Fit c="ml-[8px] w-[112px] overflow-hidden [mask-image:linear-gradient(to_right,#000_82%,transparent)]">Jobs Matching My Sk</Fit>
        <div className="ml-[21px]"><Page /></div><div className="ml-[22px]"><Page /></div>
        <svg width="8" height="8" viewBox="0 0 8 8" className="ml-[62px]" fill="none" stroke="#555" strokeWidth="1.500"><path d="M.5.500L4 4 .5 7.500M4.500.500L8 4 4.500 7.500" /></svg>
        <div className="ml-[10px] h-[16px] w-px bg-[#c8cacd]" />
        <svg width="12" height="14" className="ml-[12px]"><path d="M.5.500h11v13H.500z" fill="#ffe389" stroke="#eccb55" /></svg>
        <Fit c="ml-[10px] w-[93px]">Other bookmarks</Fit>
      </div>
      <div className="relative flex min-h-0 flex-1">
        <div className="flex w-[658px] flex-col">
          <div className="h-[14px] shrink-0 bg-[#f1f1f1]" />
          <div className="flex h-[44px] shrink-0 items-center bg-linear-to-b from-[#4b76c3] to-[#345da8] pl-[15px]">
            <div className="flex h-[27px] w-[29px] flex-col items-center justify-center gap-[3px] rounded-[2px] border border-[#2d5399]">{[0, 1, 2].map((i) => <div key={i} className="h-[2px] w-[17px] bg-white" />)}</div>
          </div>
          <div className={`mx-[15px] flex h-[122px] shrink-0 items-center bg-[#fafafa] pt-[24px] pl-[62px] text-[13px] ${UR}`}><div className="text-[#7857b0]"><Fit rtl c="w-[56px]">مزید جانیں</Fit></div><span className="ml-[3px] text-black">.</span></div>
          <div className="mx-[15px] flex h-[198px] shrink-0 flex-col border border-[#e2e2e2]">
            <div className="flex h-[41px] shrink-0 items-center bg-[#f0f0f0] pl-[15px]">
              <div className={`flex h-[30px] w-[130px] items-center rounded-[2px] border border-[#ccc] bg-[#f5f5f5] pl-[18px] text-[12px] text-[#444] ${UR}`}><Fit rtl c="w-[73px]">مخصوص حروف</Fit><span className="ml-[3px] text-[17px] font-bold text-black">Ω</span></div>
            </div>
            <div className={`flex flex-col items-end pt-[12px] pr-[15px] text-[15px] leading-[21px] text-black ${UR}`}>
              <div className="flex items-center">
                <Fit rtl c="w-[129px]">کے ضابطہ اخلاق میں</Fit>
                <div className="ml-[3px] font-['Roboto',sans-serif]"><Fit c="w-[53px]">"<span className="underline decoration-red-500 decoration-wavy decoration-1 underline-offset-2">GDPR</span>"</Fit></div>
                <div className="ml-[4px] font-['Roboto',sans-serif]"><Fit c="w-[79px]">-  2016/679</Fit></div>
                <div className="ml-[5px]"><Fit rtl c="w-[122px]">(جو کہ یورپی یونین</Fit></div>
                <div className="ml-[5px]"><Fit rtl c="w-[70px]">کی حفاظت</Fit></div>
                <div className="mr-[3px] ml-[4px] h-[17px] w-px bg-black" />
                <div className="ml-[1px]"><Fit rtl c="w-[89px]">نجی معلومات</Fit></div>
              </div>
              <Fit rtl c="w-[563px]">تفصیل سے ہے.) جو کہ آرچی روڈن کے اختیار یا عمل میں ہے اور مجموعی طور پر آرچی روڈن</Fit>
              <div className="flex"><Fit rtl c="w-[520px]">قانون سازی کے ساتھ ساتھ تمام قابل اطلاق قومی  رازداری کے  قوانین کو یقینی بناۓ.</Fit><div className="ml-[4px] font-['Roboto',sans-serif]"><Fit c="w-[41px]"><span className="underline decoration-red-500 decoration-wavy decoration-1 underline-offset-2">GDPR</span></Fit></div></div>
            </div>
            <div className={`mt-auto mr-[31px] mb-[6px] ml-auto text-[12px] text-[#888] ${UR}`}><Fit rtl c="w-[123px]">اسے بہتر بنانے میں مدد کریں!</Fit></div>
          </div>
        </div>
        <div className="flex w-[17px] flex-col items-center bg-[#f1f1f1]">
          <svg width="7" height="4" className="mt-[7px] shrink-0"><path d="M0 4h7L3.500 0z" fill="#505050" /></svg>
          <div className="mt-[38px] h-[118px] w-[13px] shrink-0 bg-[#c1c1c1]" />
          <svg width="7" height="4" className="mt-auto mb-[7px]"><path d="M0 0h7L3.500 4z" fill="#505050" /></svg>
        </div>
        <Keyboard />
      </div>
    </section>
  );
}

/* ---------- desktop ---------- */
function Wallpaper() {
  return (
    <svg className="absolute inset-0" width="1366" height="768" viewBox="0 0 1366 768">
      <defs>
        <linearGradient id="sky" x1="0" y1="0" x2="0" y2="1"><stop offset="0" stopColor="#001430" /><stop offset=".35" stopColor="#00224a" /><stop offset=".75" stopColor="#003a72" /><stop offset=".95" stopColor="#002a56" /></linearGradient>
        <radialGradient id="dark" cx="1340" cy="760" r="260" gradientUnits="userSpaceOnUse"><stop offset="0" stopColor="#001c3c" /><stop offset=".5" stopColor="#001f46" stopOpacity=".85" /><stop offset="1" stopColor="#002048" stopOpacity="0" /></radialGradient>
        <filter id="b" x="-50%" y="-50%" width="200%" height="200%"><feGaussianBlur stdDeviation="14" /></filter>
        <filter id="m" x="-50%" y="-50%" width="200%" height="200%"><feGaussianBlur stdDeviation="22" /></filter>
        <filter id="bb" x="-50%" y="-100%" width="200%" height="300%"><feGaussianBlur stdDeviation="32" /></filter>
        <filter id="s"><feGaussianBlur stdDeviation="3" /></filter><filter id="t"><feGaussianBlur stdDeviation=".8" /></filter>
      </defs>
      <path d="M0 0h1366v768H0z" fill="url(#sky)" />
      <ellipse cx="1000" cy="630" rx="260" ry="62" fill="#0062bc" transform="rotate(-14 1000 630)" filter="url(#bb)" />
      <path d="M0 0h1366v768H0z" fill="url(#dark)" />
      <path d="M1196 586L1100 650 980 690 850 690 930 600 1100 540z" fill="#0074dc" opacity=".85" filter="url(#m)" />
      <path d="M1192 585L1120 632 1010 640 1080 560z" fill="#009cff" opacity=".9" filter="url(#b)" />
      <path d="M1060 500h135v84L1060 566z" fill="#008cf2" /><path d="M1060 500h135v32L1060 552z" fill="#30aef4" />
      <path d="M1060 552l135-21" stroke="#5cc8fa" strokeWidth="2" filter="url(#t)" /><path d="M1060 566l135 19" stroke="#59d3ff" strokeWidth="2.500" filter="url(#t)" />
      <path d="M1194.500 500v85" stroke="#8ee6ff" strokeWidth="4" filter="url(#t)" />
      <path d="M1200 583l-28 2-24 9 20 4z" fill="#d9f4ff" filter="url(#s)" /><path d="M1198 577l1 6 6 2-6 1-2 6-2-6-8-1 8-2z" fill="#bdf1ff" filter="url(#t)" />
      <path d="M1210 580l156-52" stroke="#2d78ba" opacity=".2" strokeWidth="2" />
    </svg>
  );
}
const NoteIcon = () => (
  <svg width="32" height="42" viewBox="0 0 32 42"><path d="M.5.500h23l8 8v33H.500z" fill="#f8f8f8" stroke="#888" /><path d="M23.500.500v8h8" fill="#ddd" stroke="#888" /><path d="M3 5.500h17M3 9.500h18M3 13.500h26M3 17.500h26M3 21.500h26M3 25.500h26M3 29.500h26M3 33.500h26M3 37.500h26" stroke="#9c9c9c" /></svg>
);
const Folder = () => (
  <svg width="32" height="42" viewBox="0 0 32 42"><path d="M1 2h24l2 3v22h4v11L8 40 1 36z" fill="#e9c96b" /><path d="M20 8l7 2v28l-7 3z" fill="#f3f5f8" /><path d="M22 16h4M22 22h4M22 26h4" stroke="#3f8fc8" strokeWidth="3" /><path d="M1 2l18 4v32l-9-2v6l-9-8z" fill="#fbe49b" /><path d="M1 2l9 6v33l-9-6z" fill="#f5d680" /></svg>
);
const ICON_POS = ['left-[-1px] top-[8px]', 'left-[74px] top-[8px]', 'left-[149px] top-[8px]', 'left-[224px] top-[8px]', 'left-[-1px] top-[107px]', 'left-[60px] top-[107px]', 'left-[520px] top-[8px]', 'left-[1273px] top-[504px]', 'left-[1274px] top-[603px]'];
function DeskIcon({ p, w, label, children }: { p: number; w: string; label: string; children: React.ReactNode }) {
  return (
    <div className={`absolute flex w-[76px] flex-col items-center text-[12px] leading-[16px] text-white [text-shadow:1px_1px_2px_#000] ${ICON_POS[p]}`}>
      <div className="flex h-[50px] items-center">{children}</div><Fit c={w}>{label}</Fit>
    </div>
  );
}

const TASK: { n: string; on?: boolean; line?: boolean; multi?: boolean; svg: React.ReactNode }[] = [
  { n: 'edge', svg: <path d="M4 13.500C5.500 7 9.500 3.500 15 3.500c7 0 10.500 5 10.500 11v2H11c.3 5.500 8 6.500 13.500 3.300v5C15 29 6 25 6 18c0-4.500 2.500-7.300 6-8.800-1 1.200-1.300 2.300-1.500 3.800h8c0-6.500-9.500-5.500-14.500.5z" fill="#0a84e0" /> },
  { n: 'files', line: true, multi: true, svg: <><path d="M3 5h9l2 2h12v17H3z" fill="#e9b94c" /><path d="M3 9h23v13H3z" fill="#fce28b" /><path d="M6 25V15h17v10h-4v-5h-9v5z" fill="#3ba9e6" /></> },
  { n: 'chrome', on: true, line: true, svg: <><circle cx="14.500" cy="14.500" r="11.500" fill="#f9c22e" /><path d="M4 9a11.500 11.500 0 0 1 21 0H14.500L9 17z" fill="#e23c2f" /><path d="M4 9l5.500 9 5 2-3.500 6A11.500 11.500 0 0 1 4 9z" fill="#2ea04f" /><circle cx="14.500" cy="14.500" r="5.500" fill="#fff" /><circle cx="14.500" cy="14.500" r="4.300" fill="#4285e8" /></> },
  { n: 'vlc', svg: <><path d="M5 19h19l2 7H3z" fill="#f08216" /><path d="M12.500 3h4L21 22c-3 2-10 2-13 0z" fill="#f08216" /><path d="M11.300 8h6.400l1.300 5h-9zM9 16.500h11l1 4H8z" fill="#f3f3f3" /></> },
  { n: 'ps', line: true, svg: <><path d="M4.500 4.500h20v20h-20z" fill="#0b1530" stroke="#8db7f5" strokeWidth="2" /><text x="8" y="19" fontSize="12" fontWeight="700" fontFamily="Open Sans" fill="#8db7f5">Ps</text></> },
  { n: 'ai', svg: <><path d="M4.500 4.500h20v20h-20z" fill="#271708" stroke="#f39a21" strokeWidth="2" /><text x="8" y="19" fontSize="12" fontWeight="700" fontFamily="Open Sans" fill="#f39a21">Ai</text></> },
  { n: 'sublime', svg: <><rect x="3" y="3" width="23" height="23" rx="2" fill="#4c4c4c" /><path d="M8 11l13-5v5l-7 3 7 2v4L8 25v-5l7-3-7-2z" fill="#ff9800" /></> },
  { n: 'torrent', svg: <><circle cx="14.500" cy="14.500" r="11.500" fill="#6f5ba7" /><g fill="none" stroke="#e9e5f4" strokeWidth="1.700"><path d="M24 22c-9 4-18-2-17-11M24 19c-7 3-13-1-13-8 0-3 3-5 6-5M23 16c-5 2-8 0-8-4" /></g></> },
  { n: 'dropbox', svg: <><rect x="3" y="3" width="23" height="24" rx="3" fill="#fff" /><path d="M11 8l3.500 2.300-3.500 2.300-3.500-2.300zM18 8l3.500 2.300-3.500 2.300-3.500-2.300zM11 12.600l3.500 2.300-3.500 2.300-3.500-2.300zM18 12.600l3.500 2.300-3.500 2.300-3.500-2.300zM14.500 17.500l3.500 2.300-3.500 2.300-3.500-2.300z" fill="#0061ff" /></> },
  { n: 'acrobat', line: true, svg: <><path d="M4 4h21v21H4z" fill="#c90d10" /><path d="M7.500 20c3-1 7-8 6-12-2-1-1 6 6 9 4 0 0-2-6 0-3 1-5 2-6 3z" fill="none" stroke="#fff" strokeWidth="1.300" /></> },
  { n: 'word', line: true, multi: true, svg: <><path d="M4 4h20v21H4z" fill="#d9e8f8" stroke="#4a7ac0" /><path d="M16 7h7M16 10h7M16 13h7M16 16h7" stroke="#7fa5d8" /><path d="M5 6h3l2 8 2-8h3l2 8 2-8h3l-4 15h-3l-2-8-2 8H8z" fill="#1b57ad" /></> },
  { n: 'notepad', line: true, svg: <><path d="M9 4l15 2-4 19-14-4z" fill="#8cc4cf" /><path d="M9 5l10 2-5 17-9-3z" fill="#cfe9ec" opacity=".75" /><path d="M24.500 6l-1 19-3 .500" fill="none" stroke="#9b7f54" /></> },
];
function Taskbar() {
  return (
    <footer className={`absolute bottom-0 left-0 flex h-[40px] w-[1366px] items-center bg-[#02070f] text-[12px] text-white ${UI}`}>
      <div className="flex w-[48px] justify-center"><svg width="16" height="16" fill="#fff"><path d="M0 2.200l6.700-1v6.300H0zM7.500 1.100L16 0v7.500H7.500zM0 8.300h6.700v6.400L0 13.800zM7.500 8.300H16V16l-8.500-1.200z" /></svg></div>
      <div className="flex h-[40px] w-[344px] items-center bg-[#333] pr-[14px] pl-[9px] text-[15px] text-[#aaa]">
        <div className="h-[21px] w-[21px] rounded-full border-[3px] border-white" />
        <Fit c="ml-[10px] w-[128px]">Type here to search</Fit>
        <svg width="11" height="17" viewBox="0 0 11 17" className="ml-auto" fill="none" stroke="#aaa"><rect x="3.500" y=".5" width="4" height="9" rx="2" /><path d="M.5 8v2c0 3 10 3 10 0V8M5.500 12.500v4M3 16.500h5" /></svg>
      </div>
      <div className="flex w-[49px] justify-center"><svg width="21" height="16" viewBox="0 0 21 16" fill="none" stroke="#fff"><path d="M5.500 1.500h10v13h-10zM3 3.500H.500v9H3M18 3.500h2.500v9H18" /></svg></div>
      {TASK.map((t) => (
        <div key={t.n} className={`flex h-[40px] w-[49px] flex-col items-center justify-between ${t.on ? 'bg-[#343a42]' : ''}`}>
          <svg width="29" height="29" viewBox="0 0 29 29" className="mt-[5px]">{t.svg}</svg>
          <div className={`flex h-[2px] justify-end ${t.on ? 'w-[49px]' : 'w-[39px]'} ${t.line ? 'bg-[#76b9ed]' : ''}`}>{t.multi && <div className="w-[8px] bg-[#456f92]" />}</div>
        </div>
      ))}
      <svg width="88" height="16" viewBox="0 0 88 16" fill="none" stroke="#fff" className="ml-[93px]">
        <path d="M2 11l5.500-5.500L13 11" strokeWidth="1.300" /><path d="M24.500 4.500h13v8h-13zM39 7v3" /><path d="M26 6h5v5h-5z" fill="#fff" stroke="none" />
        <path d="M54 3.500h6.500v8H49.500V6.500M55 11.500v3M51 14.500h8M46.500 1.500h4v4h-4z" /><path d="M70 6h2l4-4v12l-4-4h-2zM78 6c1 1 1 3 0 4M80.500 4c2 2 2 6 0 8M83 2c3 4 3 8 0 12" />
      </svg>
      <div className="ml-[13px] flex w-[16px] flex-col items-center leading-[19px]"><span lang="ur" className={`h-[19px] text-[13px] leading-[19px] ${UR}`}>آر</span><Fit c="w-[15px]">UR</Fit></div>
      <div className="ml-[15px] flex w-[52px] flex-col items-center leading-[18px]"><Fit c="w-[43px]">4:00 AM</Fit><Fit c="w-[51px]">10/3/2018</Fit></div>
      <svg width="16" height="17" viewBox="0 0 16 17" fill="none" stroke="#fff" className="ml-[18px]"><path d="M.5.500h15v12h-5v3l-4-3h-6z" /></svg>
      <div className="mr-[4px] ml-auto h-[40px] w-px bg-[#555]" />
    </footer>
  );
}

export default function App() {
  return (
    <main className={`relative h-[768px] w-[1366px] overflow-hidden bg-[#00183a] ${UI}`}>
      <Wallpaper />
      <DeskIcon p={0} w="w-[40px]" label="This PC"><svg width="44" height="42" viewBox="0 0 44 42"><path d="M13 1l30 11v18L13 22z" fill="#2ea3f2" stroke="#c9e1f2" /><path d="M15 3l26 10L15 20z" fill="#75c6fb" opacity=".6" /><path d="M21 29l8-4 8 3-9 4z" fill="#c9ced3" /><path d="M1 34l9-4 24 7-9 4z" fill="#e5e8eb" stroke="#8b9096" strokeWidth=".7" /><path d="M6 34l18 5M10 32l18 5" stroke="#92979d" strokeDasharray="2 1" /></svg></DeskIcon>
      <DeskIcon p={1} w="w-[69px]" label="576781-smi..."><Folder /></DeskIcon>
      <DeskIcon p={2} w="w-[28px]" label="to do"><NoteIcon /></DeskIcon>
      <DeskIcon p={3} w="w-[25px]" label="todo"><svg width="46" height="46" viewBox="0 0 46 46" className="mt-[-3px]"><path d="M11 0h25l9 9v36H11z" fill="#3c1b07" /><path d="M36 0v9h9z" fill="#f7a64a" /><path d="M1 3h32v13H1z" fill="#fdbd00" /><text x="12" y="13" fontSize="9" fontWeight="700" fontFamily="Liberation Sans" fill="#4a2200">AI</text><text x="18" y="37" fontSize="20" fontWeight="700" fontFamily="Open Sans" fill="#fba33c">Ai</text></svg></DeskIcon>
      <DeskIcon p={4} w="w-[60px]" label="Recycle Bin"><svg width="40" height="43" viewBox="0 0 40 43"><path d="M1 5l14-4 24 4-5 34-11 3-17-5z" fill="#a8b0b9" opacity=".9" /><path d="M1 5l14-4 24 4-14 6z" fill="#626b76" stroke="#d4d9df" /><path d="M25 11l14-6-5 34-11 3z" fill="#8b949f" /><path d="M7 21l3-4 4 1 2 3M17 24l1 4-4 3M10 31l-4-2v-4" fill="none" stroke="#1583d8" strokeWidth="3.500" /></svg></DeskIcon>
      <div className="absolute top-[106px] left-[88px] h-[45px] w-[40px] bg-[#ececec] pt-[16px]"><div className="ml-[9px] h-px w-[20px] bg-[#aaa]" /><div className="mt-[2px] ml-[11px] h-px w-[20px] bg-[#aaa]" /></div>
      <div className="absolute top-[157px] left-[78px] text-[12px] leading-[16px] text-white"><Fit c="w-[32px]">36410</Fit></div>
      <div className="absolute top-[217px] left-[13px] h-[14px] w-[45px] bg-radial-[at_60%_60%] from-[#5d3c30] to-[#060404] to-60%" />
      <div className="absolute top-[208px] left-[96px]"><NoteIcon /></div>
      <DeskIcon p={6} w="w-[60px]" label="Contact..."><Folder /></DeskIcon>
      <DeskIcon p={7} w="w-[20px]" label="upp"><NoteIcon /></DeskIcon>
      <DeskIcon p={8} w="w-[57px]" label="internships"><NoteIcon /></DeskIcon>
      <section className="absolute top-[300px] left-[600px] flex h-[345px] w-[378px] flex-col justify-end border border-[#556] bg-[#f0f0f0] shadow-[0_3px_12px_rgba(0,0,0,.5)]">
        <div className="flex h-[26px]"><div className="mb-[17px] w-[361px] bg-white" /><svg width="8" height="5" className="mt-[1px] ml-[3px]"><path d="M0 0h8L4 4z" fill="#aaa" /></svg></div>
        <div className="flex items-center justify-end pr-[2px] pb-px"><svg width="30" height="16" viewBox="0 0 30 16" fill="#aaa"><path d="M5 2l4 4-4 4" fill="none" stroke="#aaa" strokeWidth="2" /><path d="M24 6h2v2h-2zM24 10h2v2h-2zM20 10h2v2h-2zM24 13h2v2h-2zM20 13h2v2h-2zM16 13h2v2h-2z" /></svg></div>
      </section>
      <WordBack />
      <WordFront />
      <Browser />
      <div className="absolute top-[272px] left-[643px] flex h-[19px] w-[35px] items-center justify-center border border-[#666] bg-[#ffffe1] text-[12px] text-black"><Fit c="w-[29px]">Close</Fit></div>
      <Taskbar />
    </main>
  );
}
